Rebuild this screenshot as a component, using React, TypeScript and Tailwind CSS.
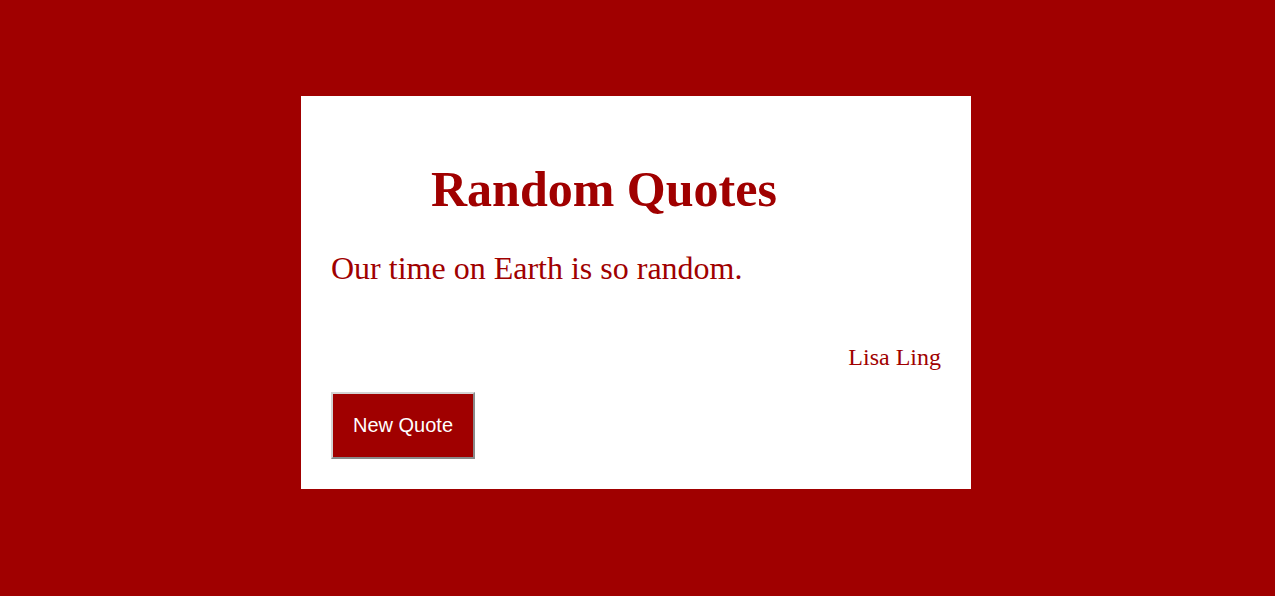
import React from 'react';

const App: React.FC = () => {
  return (
    <div className="min-h-screen w-full bg-[#a00000] pt-[96px]" style={{ fontFamily: '"Liberation Serif", serif' }}>
      <div className="ml-[301px] w-[670px] bg-white px-[30px] pt-[66px] pb-[30px] text-[#a00000]">
        {/* Title */}
        <h1 className="pl-[100px] text-[50px] font-bold leading-[55px]">Random Quotes</h1>
        <p className="mt-[34px] text-[32px] leading-[35px]">Our time on Earth is so random.</p>
        <p className="mt-[58px] text-right text-[24px] leading-[27px]">Lisa Ling</p>
        <button
          className="mt-[21px] h-[67px] border-2 border-t-[#d4d4d4] border-l-[#d4d4d4] border-r-[#8a8a8a] border-b-[#8a8a8a] bg-[#a00000] px-[20px] pb-[2px] text-[20px] text-white"
          style={{ fontFamily: '"Liberation Sans", Arial, sans-serif' }}
        >
          New Quote
        </button>
      </div>
    </div>
  );
};

export default App;
